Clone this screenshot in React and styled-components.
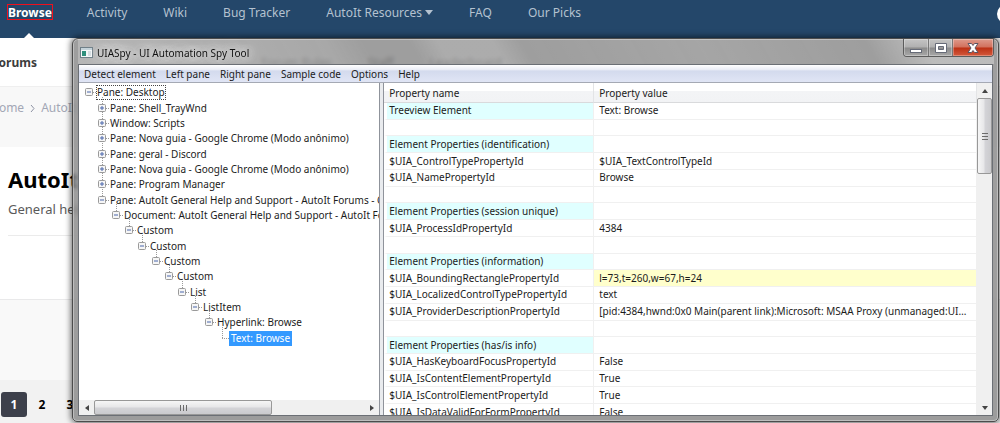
import React, { Component } from 'react';
import styled, { createGlobalStyle, css } from 'styled-components';

const GlobalStyle = createGlobalStyle`
	* {
		box-sizing: border-box;
	}

	body {
		margin: 0;
		font-family: 'Noto Sans', 'Open Sans', sans-serif;
	}

	button {
		padding: 0;
		border: 0;
		background: none;
		color: inherit;
		font: inherit;
	}
`;

/* Forum page */

const Desktop = styled.div`
	position: relative;
	display: flex;
	flex-direction: column;
	height: 100vh;
	overflow: hidden;
	background: #fff;
`;

const NavBar = styled.nav`
	display: flex;
	flex: none;
	gap: 36px;
	height: 38px;
	padding: 4px 8px 0 7px;
	background: #24476a;
	line-height: 18px;
	font-size: 12px;
	overflow: hidden;
`;

const NavLink = styled.a`
	position: relative;
	height: 34px;
	color: #b4c2d0;
	text-decoration: none;
	white-space: nowrap;

	${props => props.$active && css`
		color: #fff;
		font-weight: bold;

		&::after {
			content: '';
			position: absolute;
			bottom: 0;
			left: calc(50% - 5px);
			border: 5px solid transparent;
			border-top: 0;
			border-bottom-color: #fff;
		}
	`}
`;

const Highlight = styled.span`
	display: block;
	height: 16px;
	margin-right: -2px;
	border: 1px solid #f0101c;
	line-height: 16px;
`;

const Avatar = styled.span`
	flex: none;
	width: 20px;
	height: 20px;
	margin-right: -25px;
	margin-left: auto;
	border-radius: 50%;
	background: #fff;
`;

const Caret = styled.svg`
	width: 8px;
	height: 5px;
	margin-left: 3px;
	vertical-align: 2px;
	fill: currentColor;
`;

const SubNav = styled.div`
	display: flex;
	flex: none;
	gap: 36px;
	align-items: center;
	height: 48px;
	color: #3c3c3c;
	font-size: 12px;
`;

const SubNavLink = styled.a`
	margin-left: ${props => props.$active ? '-8px' : '0'};
	color: inherit;
	font-weight: ${props => props.$active ? 'bold' : 'normal'};
	text-decoration: none;
	white-space: nowrap;
`;

const SubNavMore = styled.div`
	display: flex;
	gap: 36px;
	margin-left: 188px;
`;

const Breadcrumb = styled.div`
	display: flex;
	flex: none;
	gap: 6px;
	height: 61px;
	padding-top: 12px;
	border-top: 1px solid #efefef;
	background: #f8f8f8;
	color: #a3a7b5;
	font-size: 12px;
	line-height: 18px;
`;

const Crumb = styled.a`
	color: inherit;
	text-decoration: none;

	&:first-child {
		margin-left: -10px;
	}
`;

const Chevron = styled.svg`
	width: 5px;
	height: 18px;
	fill: none;
	stroke: #8d92a3;
`;

const ForumHeader = styled.header`
	flex: none;
	height: 153px;
	padding: 16px 8px 0;
	border-bottom: 1px solid #e9e9ea;
`;

const ForumTitle = styled.h1`
	margin: 0;
	color: #000;
	font-size: 22px;
	line-height: 32px;
`;

const ForumText = styled.p`
	margin: 0;
	padding-bottom: 12px;
	border-bottom: 1px solid #ebebeb;
	color: #5a5a5a;
	font-size: 13px;
	line-height: 28px;
`;

const Filler = styled.div`
	flex: 1;
	background: #f9f9f9;
`;

const Pagination = styled.div`
	display: flex;
	flex: none;
	gap: 2px;
	height: 43px;
	padding: 12px 1px 0;
	background: #f2f2f2;
`;

const PageButton = styled.button`
	width: 26px;
	height: 25px;
	border-radius: 3px;
	background: ${props => props.$active ? '#3d404b' : 'transparent'};
	color: ${props => props.$active ? '#fff' : '#000'};
	font-size: 12px;
	font-weight: bold;
`;

/* Tool window */

const Window = styled.section`
	position: absolute;
	top: 38px;
	right: 1px;
	bottom: 1px;
	left: 72px;
	display: flex;
	flex-direction: column;
	padding: 0 5px 5px;
	border: 1px solid #4c4c4c;
	border-radius: 6px 6px 5px 5px;
	background: rgba(134, 134, 134, 0.8);
	backdrop-filter: blur(2px);
	box-shadow: inset 0 0 0 1px rgba(255, 255, 255, 0.35), 0 0 6px 1px rgba(0, 0, 0, 0.6);
	color: #1c1c1c;
	font-size: 10px;
`;

const TitleBar = styled.header`
	display: flex;
	flex: none;
	height: 25px;
	padding: 0 0 0 1px;
	margin-right: -1px;
	background: linear-gradient(
		60deg,
		rgba(255, 255, 255, 0.25) 0%,
		rgba(255, 255, 255, 0.1) 28%,
		transparent 32%,
		transparent 37%,
		rgba(255, 255, 255, 0.14) 40%,
		rgba(255, 255, 255, 0.14) 46%,
		transparent 49%,
		rgba(255, 255, 255, 0.08) 68%,
		transparent 86%,
		rgba(255, 255, 255, 0.3) 92%
	);
`;

const AppIcon = styled.svg`
	width: 13px;
	height: 11px;
	margin: 8px 4px 0 1px;
`;

const Title = styled.h2`
	flex: 1;
	margin: 0;
	font-size: 10px;
	font-weight: normal;
	line-height: 28px;
	text-shadow: 0 0 6px #ddd, 0 0 10px #ddd, 0 0 14px #ddd;
	color: #111;
`;

const WindowButtons = styled.div`
	display: flex;
	height: 18px;
	border: 1px solid #5c5c5c;
	border-top: 0;
	border-radius: 0 0 4px 4px;
	overflow: hidden;
`;

const WindowButton = styled.button`
	width: ${props => props.$close ? '41px' : '24px'};
	border-left: 1px solid #777;
	background: ${props => props.$close
		? 'linear-gradient(#dd9a8c 0%, #d2705c 48%, #bb3014 52%, #d4593c 100%)'
		: 'linear-gradient(#c4c4c4 0%, #b0b0b0 48%, #8a8a8a 52%, #a8a8a8 100%)'};
	box-shadow: inset 0 0 0 1px rgba(255, 255, 255, 0.3);

	&:first-child {
		border-left: 0;
	}

	svg {
		display: block;
		width: 14px;
		height: 12px;
		margin: auto;
	}
`;

const Client = styled.div`
	display: flex;
	flex: 1;
	flex-direction: column;
	min-height: 0;
	border: 1px solid #6b6f75;
	background: #fff;
`;

const MenuBar = styled.div`
	display: flex;
	flex: none;
	gap: 10px;
	height: 18px;
	padding: 0 5px;
	border-bottom: 1px solid #a5a9b4;
	background: linear-gradient(#fff 0%, #e8ebf5 30%, #d3daed 34%, #e0e5f5 100%);
	line-height: 18px;
`;

const Panes = styled.div`
	display: grid;
	flex: 1;
	grid-template-columns: 33fr 67fr;
	min-height: 0;
`;

const TreePane = styled.div`
	display: flex;
	flex-direction: column;
	justify-content: space-between;
	min-width: 0;
	min-height: 0;
	overflow: hidden;
	border-right: 1px solid #8f939b;
`;

const Tree = styled.ul`
	display: grid;
	grid-template-rows: repeat(17, 1fr);
	height: 261px;
	margin: 2px 0 0;
	padding: 0 0 0 6px;
	list-style: none;
	overflow: hidden;
`;

const Node = styled.li`
	display: flex;
	align-items: center;
	min-height: 0;
	padding-left: ${props => Math.round(props.$depth * 13.3)}px;
	white-space: nowrap;
`;

const Toggle = styled.button`
	flex: none;
	width: 11px;
	height: 15px;

	svg {
		display: block;
		width: 11px;
		height: 15px;
		overflow: visible;
	}
`;

const Label = styled.span`
	height: 15px;
	padding: 0 1px;
	line-height: 15px;
	outline: ${props => props.$focus ? '1px dotted #444' : 'none'};
	outline-offset: -1px;

	${props => props.$selected && css`
		padding: 0 2px;
		background: #3399ff;
		color: #fff;
	`}
`;

const ListPane = styled.div`
	display: flex;
	min-width: 0;
	min-height: 0;
	margin-left: 3px;
	border-left: 1px solid #8f939b;
	box-shadow: -3px 0 0 #e9ebee;
`;

const TableArea = styled.div`
	flex: 1;
	min-width: 0;
	overflow: hidden;
`;

const Table = styled.table`
	width: 100%;
	height: 338px;
	border-collapse: separate;
	border-spacing: 0;
	table-layout: fixed;
	line-height: 15px;
`;

const HeadCell = styled.th`
	width: ${props => props.$name ? '210px' : 'auto'};
	height: 20px;
	padding: 2px 4px 0 5px;
	border-right: 1px solid #e3e4e6;
	border-bottom: 1px solid #d9dadc;
	background: linear-gradient(#fff 40%, #f3f4f6 44%, #f2f3f5 100%);
	font-weight: normal;
	text-align: left;
`;

const Cell = styled.td`
	height: 16px;
	padding: 0 4px 0 ${props => props.$name ? '2px' : '5px'};
	border-right: 1px solid #f0f0f0;
	border-bottom: 1px solid #f0f0f0;
	border-left: ${props => props.$name ? '3px solid #fff' : '0'};
	background: ${props => props.$fill || '#fff'};
	overflow: hidden;
	text-overflow: ellipsis;
	white-space: nowrap;
`;

const Scrollbar = styled.div`
	display: flex;
	flex: none;
	flex-direction: ${props => props.$vertical ? 'column' : 'row'};
	${props => props.$vertical ? 'width' : 'height'}: 15px;
	background: #f0f0f0;
`;

const ScrollButton = styled.button`
	display: flex;
	flex: none;
	align-items: center;
	justify-content: center;
	width: 15px;
	height: 15px;

	svg {
		width: 6px;
		height: 6px;
		fill: #444;
	}
`;

const Track = styled.div`
	display: flex;
	flex: 1;
	flex-direction: inherit;
`;

const Thumb = styled.div`
	display: flex;
	align-items: center;
	justify-content: center;
	flex: 0 0 ${props => props.$size};
	border: 1px solid #989898;
	border-radius: 2px;
	background: linear-gradient(${props => props.$vertical ? '90deg' : '180deg'}, #f6f6f6 0%, #e6e6e8 48%, #d4d4d8 52%, #cacacd 100%);

	svg {
		width: 8px;
		height: 8px;
		transform: ${props => props.$vertical ? 'rotate(90deg)' : 'none'};
		stroke: #6b6b6b;
	}
`;

const links = ['Browse', 'Activity', 'Wiki', 'Bug Tracker', 'AutoIt Resources', 'FAQ', 'Our Picks'];
const menus = ['Detect element', 'Left pane', 'Right pane', 'Sample code', 'Options', 'Help'];

const nodes = [
	[0, 'Pane: Desktop', 'open'],
	[1, 'Pane: Shell_TrayWnd', 'closed'],
	[1, 'Window: Scripts', 'closed'],
	[1, 'Pane: Nova guia - Google Chrome (Modo anônimo)', 'closed'],
	[1, 'Pane: geral - Discord', 'closed'],
	[1, 'Pane: Nova guia - Google Chrome (Modo anônimo)', 'closed'],
	[1, 'Pane: Program Manager', 'closed'],
	[1, 'Pane: AutoIt General Help and Support - AutoIt Forums - Google Chrome', 'open'],
	[2, 'Document: AutoIt General Help and Support - AutoIt Forums', 'open'],
	[3, 'Custom', 'open'],
	[4, 'Custom', 'open'],
	[5, 'Custom', 'open'],
	[6, 'Custom', 'open'],
	[7, 'List', 'open'],
	[8, 'ListItem', 'open'],
	[9, 'Hyperlink: Browse', 'open'],
	[10, 'Text: Browse', 'leaf'],
];

const rows = [
	['Treeview Element', 'Text: Browse', true],
	[],
	['Element Properties (identification)', '', true],
	['$UIA_ControlTypePropertyId', '$UIA_TextControlTypeId'],
	['$UIA_NamePropertyId', 'Browse'],
	[],
	['Element Properties (session unique)', '', true],
	['$UIA_ProcessIdPropertyId', '4384'],
	[],
	['Element Properties (information)', '', true],
	['$UIA_BoundingRectanglePropertyId', 'l=73,t=260,w=67,h=24', false, '#ffffcc'],
	['$UIA_LocalizedControlTypePropertyId', 'text'],
	['$UIA_ProviderDescriptionPropertyId', '[pid:4384,hwnd:0x0 Main(parent link):Microsoft: MSAA Proxy (unmanaged:UIAutomationCore.dll)]'],
	[],
	['Element Properties (has/is info)', '', true],
	['$UIA_HasKeyboardFocusPropertyId', 'False'],
	['$UIA_IsContentElementPropertyId', 'True'],
	['$UIA_IsControlElementPropertyId', 'True'],
	['$UIA_IsDataValidForFormPropertyId', 'False'],
];

const arrows = {
	up: 'M0 5 L3 1 L6 5 Z',
	down: 'M0 1 L6 1 L3 5 Z',
	left: 'M5 0 L1 3 L5 6 Z',
	right: 'M1 0 L5 3 L1 6 Z',
};

const Arrow = ({ to }) => (
	<ScrollButton type="button" aria-label={`Scroll ${to}`}>
		<svg viewBox="0 0 6 6"><path d={arrows[to]} /></svg>
	</ScrollButton>
);

const Grip = () => (
	<svg viewBox="0 0 8 8"><path d="M1.5 1V7M4.5 1V7M7.5 1V7" /></svg>
);

const Branch = ({ depth, state }) => (
	<svg viewBox="0 0 11 15" fill="none" stroke="#9a9a9a">
		{depth > 0 && <path d="M4.5 -4V8" strokeDasharray="1 1" />}
		<path d={state === 'leaf' ? 'M4 7.5H11' : 'M8 7.5H11'} strokeDasharray="1 1" />
		{state !== 'leaf' && (
			<>
				<rect x="0.5" y="3.5" width="7" height="7" rx="1" fill="#f6f6f6" />
				<path d="M2 7H6" stroke="#4a66ab" />
				{state === 'closed' && <path d="M4 5V9" stroke="#4a66ab" />}
			</>
		)}
	</svg>
);

class App extends Component {

	render() {
		return (
			<Desktop>
				<GlobalStyle />
				<NavBar>
					{links.map(link => (
						<NavLink key={link} href="#" $active={link === 'Browse'}>
							{link === 'Browse' ? <Highlight>{link}</Highlight> : link}
							{link === 'AutoIt Resources' && (
								<Caret viewBox="0 0 8 5"><path d="M0 0H8L4 5Z" /></Caret>
							)}
						</NavLink>
					))}
					<Avatar />
				</NavBar>
				<SubNav>
					<SubNavLink href="#" $active>Forums</SubNavLink>
					<SubNavMore>
						<SubNavLink href="#">Forum Rules</SubNavLink>
						<SubNavLink href="#">Staff</SubNavLink>
						<SubNavLink href="#">Leaderboard</SubNavLink>
					</SubNavMore>
				</SubNav>
				<Breadcrumb>
					<Crumb href="#">Home</Crumb>
					<Chevron viewBox="0 0 5 18"><path d="M1 6L4 9.5L1 13" /></Chevron>
					<Crumb href="#">AutoIt</Crumb>
				</Breadcrumb>
				<ForumHeader>
					<ForumTitle>AutoIt</ForumTitle>
					<ForumText>General help</ForumText>
				</ForumHeader>
				<Filler />
				<Pagination>
					{[1, 2, 3].map(page => (
						<PageButton key={page} type="button" $active={page === 1}>{page}</PageButton>
					))}
				</Pagination>

				<Window>
					<TitleBar>
						<AppIcon viewBox="0 0 13 11">
							<rect x="0.5" y="0.5" width="12" height="10" fill="#f4f7f8" stroke="#6f7f88" />
							<rect x="1" y="1" width="11" height="2" fill="#c5d3da" />
							<rect x="2" y="4" width="4" height="5" fill="#2f8f7c" />
							<rect x="8" y="4" width="3" height="5" fill="#d5dde1" />
						</AppIcon>
						<Title>UIASpy - UI Automation Spy Tool</Title>
						<WindowButtons>
							<WindowButton type="button" aria-label="Minimize">
								<svg viewBox="0 0 14 12"><rect x="1.5" y="7.5" width="11" height="3" fill="#fff" stroke="#666b78" /></svg>
							</WindowButton>
							<WindowButton type="button" aria-label="Maximize">
								<svg viewBox="0 0 14 12">
									<path d="M1.5 1.5H12.5V10.5H1.5ZM4.5 4.5V7.5H9.5V4.5Z" fill="#fff" fillRule="evenodd" stroke="#666b78" />
								</svg>
							</WindowButton>
							<WindowButton type="button" aria-label="Close" $close>
								<svg viewBox="0 0 14 12">
									<path d="M2 1.5H5.5L7 3.5L8.5 1.5H12L9 6L12 10.5H8.5L7 8.5L5.5 10.5H2L5 6Z" fill="#fff" stroke="#5d5563" />
								</svg>
							</WindowButton>
						</WindowButtons>
					</TitleBar>
					<Client>
						<MenuBar>
							{menus.map(menu => <button key={menu} type="button">{menu}</button>)}
						</MenuBar>
						<Panes>
							<TreePane>
								<Tree>
									{nodes.map(([depth, text, state], i) => (
										<Node key={i} $depth={depth}>
											<Toggle type="button" aria-label={`Toggle ${text}`}>
												<Branch depth={depth} state={state} />
											</Toggle>
											<Label $focus={depth === 0} $selected={state === 'leaf'}>{text}</Label>
										</Node>
									))}
								</Tree>
								<Scrollbar>
									<Arrow to="left" />
									<Track>
										<Thumb $size="66%"><Grip /></Thumb>
									</Track>
									<Arrow to="right" />
								</Scrollbar>
							</TreePane>
							<ListPane>
								<TableArea>
									<Table>
										<thead>
											<tr>
												<HeadCell $name>Property name</HeadCell>
												<HeadCell>Property value</HeadCell>
											</tr>
										</thead>
										<tbody>
											{rows.map(([name, value, group, fill], i) => (
												<tr key={i}>
													<Cell $name $fill={group && '#e0ffff'}>{name || '\u00a0'}</Cell>
													<Cell $fill={fill}>{value}</Cell>
												</tr>
											))}
										</tbody>
									</Table>
								</TableArea>
								<Scrollbar $vertical>
									<Arrow to="up" />
									<Track>
										<Thumb $vertical $size="25%"><Grip /></Thumb>
									</Track>
									<Arrow to="down" />
								</Scrollbar>
							</ListPane>
						</Panes>
					</Client>
				</Window>
			</Desktop>
		);
	}
}
export default App;
